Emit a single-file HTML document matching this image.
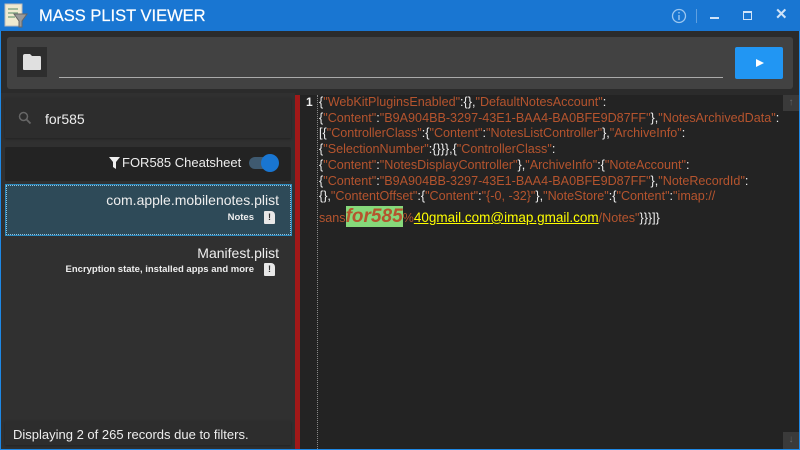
<!DOCTYPE html>
<html><head><style>
*{box-sizing:border-box;margin:0;padding:0}
body{width:800px;height:450px;background:#2b2b2b;font-family:"Liberation Sans",sans-serif;overflow:hidden;position:relative}
.abs{position:absolute}
.title{left:0;top:0;width:800px;height:31px;background:#1976d2;color:#fff}
.border{left:0;top:31px;width:800px;height:419px;border:1px solid #1e88e5;border-top:none}
.s{color:#b5542e}
.w{color:#eee}
</style></head><body>
<div class="abs title">
 <svg class="abs" style="left:3px;top:2px" width="26" height="28"><rect x="2" y="2" width="17" height="22" fill="#f0ead0" stroke="#bbb"/><g stroke="#8a8" stroke-width="1.5"><line x1="5" y1="7" x2="15" y2="7"/><line x1="5" y1="11" x2="15" y2="11"/><line x1="5" y1="15" x2="12" y2="15"/></g><path d="M11 12 L24 12 L19 19 L19 25 L16 25 L16 19 Z" fill="#999" stroke="#666"/></svg>
 <div class="abs" style="left:39px;top:7px;font-size:16.5px;font-weight:500;-webkit-text-stroke:0.2px #fff">MASS PLIST VIEWER</div>
 <svg class="abs" style="left:671px;top:8px" width="16" height="16"><circle cx="8" cy="8" r="6.5" fill="none" stroke="#9cc7f0" stroke-width="1.3"/><rect x="7.3" y="7" width="1.4" height="5" fill="#9cc7f0"/><rect x="7.3" y="4" width="1.4" height="1.5" fill="#9cc7f0"/></svg>
 <div class="abs" style="left:696px;top:9px;width:1px;height:14px;background:#5fa0e0"></div>
 <div class="abs" style="left:710px;top:17px;width:9px;height:2px;background:#cfe3f8"></div>
 <div class="abs" style="left:743px;top:11px;width:9px;height:9px;border:1px solid #cfe3f8;border-top:2px solid #cfe3f8"></div>
 <div class="abs" style="left:775px;top:5px;font-size:15px;color:#cfe3f8;font-weight:bold">✕</div>
</div>
<div class="abs border"></div>
<div class="abs" style="left:7px;top:37px;width:786px;height:52px;background:#424242;border-radius:3px"></div>
<div class="abs" style="left:17px;top:47px;width:30px;height:30px;background:#2e2e2e"></div>
<svg class="abs" style="left:22px;top:53px" width="20" height="18"><path d="M1 3 Q1 1 3 1 L8 1 L10 3 L18 3 Q19 3 19 5 L19 16 Q19 17 18 17 L2 17 Q1 17 1 16 Z" fill="#e0e0e0"/></svg>
<div class="abs" style="left:59px;top:77px;width:664px;height:1px;background:#aaa"></div>
<div class="abs" style="left:735px;top:47px;width:48px;height:32px;background:#2196f3;border-radius:2px"></div>
<svg class="abs" style="left:755px;top:58px" width="10" height="10"><path d="M1 1 L9 5 L1 9 Z" fill="#fff"/></svg>
<div class="abs" style="left:1px;top:93px;width:294px;height:356px;background:#303030"></div>
<div class="abs" style="left:5px;top:98px;width:286px;height:40px;background:#2d2d2d;box-shadow:0 1px 2px #222"></div>
<svg class="abs" style="left:18px;top:111px" width="14" height="14"><circle cx="5.5" cy="5.5" r="4" fill="none" stroke="#666" stroke-width="1.5"/><line x1="8.5" y1="8.5" x2="12.5" y2="12.5" stroke="#666" stroke-width="1.8"/></svg>
<div class="abs" style="left:45px;top:111px;font-size:14px;color:#eee">for585</div>
<div class="abs" style="left:5px;top:147px;width:286px;height:34px;background:#232323;border-radius:2px"></div>
<svg class="abs" style="left:109px;top:157px" width="11" height="12"><path d="M0 0 L11 0 L7 5 L7 12 L4 10 L4 5 Z" fill="#eee"/></svg>
<div class="abs" style="left:122px;top:155px;font-size:13px;color:#eee">FOR585 Cheatsheet</div>
<div class="abs" style="left:249px;top:157px;width:28px;height:12px;border-radius:6px;background:#3f5a70"></div>
<div class="abs" style="left:261px;top:154px;width:18px;height:18px;border-radius:9px;background:#1976d2"></div>
<div class="abs" style="left:6px;top:185px;width:285px;height:50px;background:#2e4a58;border:1px dotted #8fc3e0;outline:1px solid #2b8bc0"></div>
<div class="abs" style="left:0;top:192px;width:279px;text-align:right;font-size:14px;color:#eee">com.apple.mobilenotes.plist</div>
<div class="abs" style="left:0;top:212px;width:254px;text-align:right;font-size:9.5px;font-weight:bold;color:#eee">Notes</div>
<div class="abs" style="left:264px;top:211px;width:11px;height:13px;background:#e8e8e8;border-radius:1px 4px 1px 1px;color:#333;font-size:9px;font-weight:bold;text-align:center;line-height:13px">!</div>
<div class="abs" style="left:0;top:245px;width:279px;text-align:right;font-size:14px;color:#eee">Manifest.plist</div>
<div class="abs" style="left:0;top:264px;width:254px;text-align:right;font-size:9.5px;font-weight:bold;color:#eee">Encryption state, installed apps and more</div>
<div class="abs" style="left:264px;top:263px;width:11px;height:13px;background:#e8e8e8;border-radius:1px 4px 1px 1px;color:#333;font-size:9px;font-weight:bold;text-align:center;line-height:13px">!</div>
<div class="abs" style="left:5px;top:421px;width:286px;height:24px;background:#2d2d2d;box-shadow:0 1px 2px #222"></div>
<div class="abs" style="left:13px;top:427px;font-size:13px;color:#eee">Displaying 2 of 265 records due to filters.</div>
<div class="abs" style="left:295px;top:95px;width:5px;height:354px;background:#a11818"></div>
<div class="abs" style="left:300px;top:95px;width:499px;height:354px;background:#232323"></div>
<div class="abs" style="left:317px;top:95px;width:0;height:354px;border-left:1px dotted #888"></div>
<div class="abs" style="left:783px;top:95px;width:16px;height:16px;background:#3a3a3a;color:#666;font-size:10px;text-align:center;line-height:16px">↑</div>
<div class="abs" style="left:783px;top:432px;width:16px;height:17px;background:#3a3a3a;color:#666;font-size:10px;text-align:center;line-height:16px">↓</div>
<div class="abs" style="left:306px;top:95px;font-size:12px;color:#eee;font-weight:bold">1</div>
<div class="abs w" style="left:319px;top:95px;width:470px;font-size:12.6px;line-height:15.7px;white-space:nowrap">
{<span class="s">"WebKitPluginsEnabled"</span>:{},<span class="s">"DefaultNotesAccount"</span>:<br>
{<span class="s">"Content"</span>:<span class="s">"B9A904BB-3297-43E1-BAA4-BA0BFE9D87FF"</span>},<span class="s">"NotesArchivedData"</span>:<br>
[{<span class="s">"ControllerClass"</span>:{<span class="s">"Content"</span>:<span class="s">"NotesListController"</span>},<span class="s">"ArchiveInfo"</span>:<br>
{<span class="s">"SelectionNumber"</span>:{}}},{<span class="s">"ControllerClass"</span>:<br>
{<span class="s">"Content"</span>:<span class="s">"NotesDisplayController"</span>},<span class="s">"ArchiveInfo"</span>:{<span class="s">"NoteAccount"</span>:<br>
{<span class="s">"Content"</span>:<span class="s">"B9A904BB-3297-43E1-BAA4-BA0BFE9D87FF"</span>},<span class="s">"NoteRecordId"</span>:<br>
{},<span class="s">"ContentOffset"</span>:{<span class="s">"Content"</span>:<span class="s">"{-0, -32}"</span>},<span class="s">"NoteStore"</span>:{<span class="s">"Content"</span>:<span class="s">"imap://</span><br>
<span style="line-height:24px"><span class="s">sans</span><span style="background:#86d87a;color:#b5542e;font-size:19px;font-weight:bold;font-style:italic">for585</span><span class="s">%</span><span style="color:#ffff00;text-decoration:underline;font-size:13.5px">40gmail.com@imap.gmail.com</span><span class="s">/Notes"</span>}}}]}</span>
</div>
</body></html>
